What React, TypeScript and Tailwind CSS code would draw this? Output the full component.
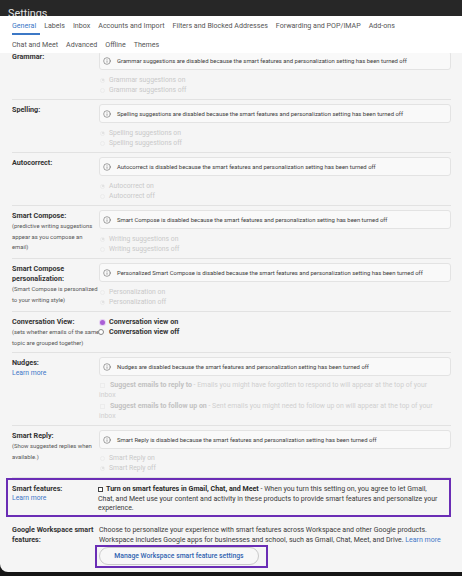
import { Info } from "lucide-react";
import type { ReactNode } from "react";

const tabsTop = ["General", "Labels", "Inbox", "Accounts and Import", "Filters and Blocked Addresses", "Forwarding and POP/IMAP", "Add-ons"];
const tabsBottom = ["Chat and Meet", "Advanced", "Offline", "Themes"];

const Notice = ({ text }: { text: string }) => (
  <div className="h-[19px] flex items-center pl-[3px] gap-[6px] rounded-[3px] border border-[#e3e3e3] bg-[#f9f9f9]">
    <Info size={8} strokeWidth={1.6} className="text-[#555] shrink-0" />
    <span className="text-[5.9px] leading-[10px] text-[#3c3c3c] whitespace-nowrap">{text}</span>
  </div>
);

const Radio = ({ label, on }: { label: string; on?: boolean }) => (
  <div className="h-[10px] flex items-center">
    <span className="ml-[1px] w-[5px] h-[5px] rounded-full border border-[#ececec] flex items-center justify-center">
      {on && <span className="w-[2px] h-[2px] rounded-full bg-[#dcdcdc]" />}
    </span>
    <span className="ml-[4px] text-[6.8px] leading-[10px] text-[#c9c9c9] whitespace-nowrap">{label}</span>
  </div>
);

const Row = ({ label, sub, link, children }: { label: ReactNode; sub?: ReactNode; link?: boolean; children: ReactNode }) => (
  <div className="ml-[12px] mr-[11px] flex border-b border-[#e2e2e2] pt-[4px] pb-[4px]">
    <div className="w-[87px] shrink-0 pt-[1px]">
      <div className="text-[7.2px] leading-[10px] font-bold text-[#333] whitespace-nowrap">{label}</div>
      {sub && <div className="text-[5.9px] leading-[10.5px] text-[#555] whitespace-nowrap">{sub}</div>}
      {link && <div className="text-[6.8px] leading-[10px] text-[#3f77c8]">Learn more</div>}
    </div>
    <div className="flex-1 min-w-0">{children}</div>
  </div>
);

const Disabled = ({ text, on, off, first, gap = "mt-[5px]" }: { text: string; on: string; off: string; first: boolean; gap?: string }) => (
  <>
    <Notice text={text} />
    <div className={gap}>
      <Radio label={on} on={first} />
      <Radio label={off} on={!first} />
    </div>
  </>
);

export default function App() {
  return (
    <div className="w-[462px] h-[576px] bg-[#161616] overflow-hidden font-['Roboto',sans-serif]">
      <div className="h-[572px] rounded-bl-[8px] bg-[#f5f5f5] overflow-hidden flex flex-col">
        <header className="h-[16px] shrink-0 bg-[#272727] pl-[8px]">
          <span className="text-[10.8px] leading-[11px] text-[#e4e4e4]">Settings</span>
        </header>

        <nav className="h-[37px] shrink-0 bg-white px-[12px] relative z-10">
          <div className="flex gap-[8px] pt-[5px]">
            {tabsTop.map((t, i) => (
              <div key={t} className="flex flex-col">
                <span className={`text-[7.1px] leading-[10px] whitespace-nowrap ${i === 0 ? "text-[#3c78c6]" : "text-[#555]"}`}>{t}</span>
                <span className={`mt-[2px] h-[2px] -mr-[4px] ${i === 0 ? "bg-[#3c78c6]" : ""}`} />
              </div>
            ))}
          </div>
          <div className="flex gap-[8px] pt-[5px]">
            {tabsBottom.map((t) => (
              <span key={t} className="text-[7.1px] leading-[10px] whitespace-nowrap text-[#555]">{t}</span>
            ))}
          </div>
        </nav>

        <main className="flex-1 overflow-hidden">
          <div className="-mt-[6px]">
            <Row label="Grammar:">
              <Disabled first text="Grammar suggestions are disabled because the smart features and personalization setting has been turned off" on="Grammar suggestions on" off="Grammar suggestions off" />
            </Row>
            <Row label="Spelling:">
              <Disabled first text="Spelling suggestions are disabled because the smart features and personalization setting has been turned off" on="Spelling suggestions on" off="Spelling suggestions off" />
            </Row>
            <Row label="Autocorrect:">
              <Disabled first text="Autocorrect is disabled because the smart features and personalization setting has been turned off" on="Autocorrect on" off="Autocorrect off" />
            </Row>
            <Row label="Smart Compose:" sub={<>(predictive writing suggestions<br />appear as you compose an<br />email)</>}>
              <Disabled first text="Smart Compose is disabled because the smart features and personalization setting has been turned off" on="Writing suggestions on" off="Writing suggestions off" />
            </Row>
            <Row label={<>Smart Compose<br />personalization:</>} sub={<>(Smart Compose is personalized<br />to your writing style)</>}>
              <Disabled first={false} text="Personalized Smart Compose is disabled because the smart features and personalization setting has been turned off" on="Personalization on" off="Personalization off" />
            </Row>
            <Row label="Conversation View:" sub={<>(sets whether emails of the same<br />topic are grouped together)</>}>
              <div className="pt-[1px]">
                <div className="h-[10px] flex items-center">
                  <span className="ml-[1px] w-[5px] h-[5px] rounded-full bg-[#a95ed6] ring-1 ring-[#e6d2f2]" />
                  <span className="ml-[4px] text-[7.2px] leading-[10px] font-bold text-[#333] whitespace-nowrap">Conversation view on</span>
                </div>
                <div className="h-[10px] flex items-center">
                  <span className="-ml-[1px] w-[6px] h-[6px] rounded-full border border-[#888] bg-white" />
                  <span className="ml-[5px] text-[7.2px] leading-[10px] font-bold text-[#333] whitespace-nowrap">Conversation view off</span>
                </div>
              </div>
            </Row>
            <Row label="Nudges:" link>
              <Notice text="Nudges are disabled because the smart features and personalization setting has been turned off" />
              <div className="mt-[4px] text-[6.9px] leading-[10px] text-[#d0d0d0]">
                <p className="whitespace-nowrap">
                  <span className="inline-block w-[5px] h-[5px] border border-[#ececec] ml-[1px] mr-[5px] align-middle" />
                  <b className="text-[#c2c2c2] text-[7px]">Suggest emails to reply to</b> - Emails you might have forgotten to respond to will appear at the top of your
                  <br />inbox
                </p>
                <p className="mt-[1px] whitespace-nowrap">
                  <span className="inline-block w-[5px] h-[5px] border border-[#ececec] ml-[1px] mr-[5px] align-middle" />
                  <b className="text-[#c2c2c2] text-[7px]">Suggest emails to follow up on</b> - Sent emails you might need to follow up on will appear at the top of your
                  <br />inbox
                </p>
              </div>
            </Row>
            <Row label="Smart Reply:" sub={<>(Show suggested replies when<br />available.)</>}>
              <Disabled first={false} gap="mt-[4px]" text="Smart Reply is disabled because the smart features and personalization setting has been turned off" on="Smart Reply on" off="Smart Reply off" />
            </Row>

            <section className="ml-[6px] mr-[11px] border-2 border-[#6a2db5] flex pl-[4px] pt-[4px] pb-[1px]">
              <div className="w-[87px] shrink-0">
                <div className="text-[7.2px] leading-[9.5px] font-bold text-[#333]">Smart features:</div>
                <div className="text-[6.8px] leading-[9.5px] text-[#3f77c8]">Learn more</div>
              </div>
              <p className="flex-1 text-[7px] leading-[9.5px] text-[#3a3a3a] whitespace-nowrap -ml-[1px]">
                <span className="inline-block w-[5px] h-[5px] border border-[#444] bg-white mr-[3px] align-middle" />
                <b className="text-[#2a2a2a] text-[7.1px]">Turn on smart features in Gmail, Chat, and Meet</b> - When you turn this setting on, you agree to let Gmail,
                <br />Chat, and Meet use your content and activity in these products to provide smart features and personalize your
                <br />experience.
              </p>
            </section>

            <div className="ml-[12px] mr-[11px] flex pt-[8px]">
              <div className="w-[87px] shrink-0 text-[7.2px] leading-[10px] font-bold text-[#333] whitespace-nowrap">
                Google Workspace smart<br />features:
              </div>
              <div className="flex-1">
                <p className="text-[7px] leading-[10px] text-[#3a3a3a] whitespace-nowrap">
                  Choose to personalize your experience with smart features across Workspace and other Google products.
                  <br />Workspace includes Google apps for businesses and school, such as Gmail, Chat, Meet, and Drive. <span className="text-[#3f77c8]">Learn more</span>
                </p>
                <div className="-ml-[4px] flex w-fit border-2 border-[#6a2db5] pl-[2px] pr-[7px] pb-[1px]">
                  <button className="h-[18px] w-[160px] rounded-full border border-[#c9c9c9] bg-[#f7f7f7] text-[6.8px] leading-[10px] font-medium text-[#2f63b0] whitespace-nowrap">
                    Manage Workspace smart feature settings
                  </button>
                </div>
              </div>
            </div>
          </div>
        </main>
      </div>
    </div>
  );
}
